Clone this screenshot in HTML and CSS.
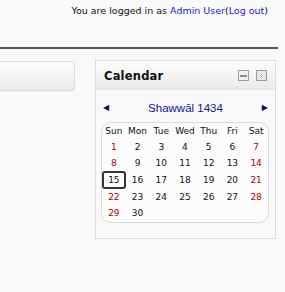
FILE: index.html
```html
<!DOCTYPE html>
<html lang="en">
<head>
  <meta charset="UTF-8">
  <meta name="viewport" content="width=device-width, initial-scale=1.0">
  <title>Calendar</title>
  <link rel="stylesheet" href="styles.css">
</head>
<body>
  <div class="page">
    <header class="topbar">
      <div class="login">You are logged in as <a href="#">Admin User</a>(<a href="#">Log out</a>)</div>
    </header>

    <div class="main">
      <div class="region-main">
        <div class="mainbox"></div>
      </div>

      <aside class="region-side">
        <div class="block">
          <div class="block-header">
            <h2>Calendar</h2>
            <div class="block-controls">
              <svg width="11" height="11" viewBox="0 0 11 11">
                <rect x="0.5" y="0.5" width="10" height="10" fill="#f2f2f2" stroke="#9c9c9c"/>
                <rect x="2" y="5" width="7" height="2" fill="#8a8a8a"/>
              </svg>
              <svg width="11" height="11" viewBox="0 0 11 11">
                <rect x="0.5" y="0.5" width="10" height="10" fill="#e4e4e4" stroke="#9c9c9c"/>
                <path d="M7 3 L4.5 5.5 L7 8" fill="none" stroke="#fff" stroke-width="2"/>
                <path d="M6.5 3.5 L4.5 5.5 L6.5 7.5" fill="none" stroke="#8a8a8a" stroke-width="1"/>
              </svg>
            </div>
          </div>

          <div class="block-content">
            <div class="cal-nav">
              <a href="#" class="arrow">&#9664;</a>
              <a href="#" class="month">Shawwāl 1434</a>
              <a href="#" class="arrow">&#9654;</a>
            </div>

            <table class="cal">
              <tr>
                <th>Sun</th><th>Mon</th><th>Tue</th><th>Wed</th><th>Thu</th><th>Fri</th><th>Sat</th>
              </tr>
              <tr>
                <td class="weekend">1</td><td>2</td><td>3</td><td>4</td><td>5</td><td>6</td><td class="weekend">7</td>
              </tr>
              <tr>
                <td class="weekend">8</td><td>9</td><td>10</td><td>11</td><td>12</td><td>13</td><td class="weekend">14</td>
              </tr>
              <tr>
                <td class="today">15</td><td>16</td><td>17</td><td>18</td><td>19</td><td>20</td><td class="weekend">21</td>
              </tr>
              <tr>
                <td class="weekend">22</td><td>23</td><td>24</td><td>25</td><td>26</td><td>27</td><td class="weekend">28</td>
              </tr>
              <tr>
                <td class="weekend">29</td><td>30</td><td></td><td></td><td></td><td></td><td></td>
              </tr>
            </table>
          </div>
        </div>
      </aside>
    </div>
  </div>
</body>
</html>
```

FILE: styles.css
```css
body {
  margin: 0;
  background: #f9f9f9;
  font-family: 'DejaVu Sans', Verdana, sans-serif;
  color: #111;
  overflow: hidden;
}
a {
  color: #2222cc;
  text-decoration: none;
}
.page {
  margin-right: 7px;
}
.topbar {
  box-sizing: border-box;
  height: 49px;
  border-bottom: 2px solid #555;
}
.login {
  text-align: right;
  font-size: 9.5px;
  line-height: 12px;
  padding: 5px 10px 0 0;
}
.main {
  display: grid;
  grid-template-columns: 1fr 181px;
  gap: 20px;
  padding: 11px 2px 0 0;
}
.mainbox {
  margin: 1px 0 0 -6px;
  height: 28px;
  border: 1px solid #dcdcdc;
  border-radius: 3px;
  background: linear-gradient(to bottom, #fbfbfb, #ececec);
}
.block {
  border: 1px solid #dcdcdc;
  background: #f9f9f9;
}
.block-header {
  height: 29px;
  display: flex;
  align-items: center;
  justify-content: space-between;
  padding: 0 8px;
  background: linear-gradient(to bottom, #fdfdfd, #e9e9e9);
}
.block-header h2 {
  margin: 0;
  font-size: 11.5px;
  line-height: 14px;
  font-weight: bold;
  color: #111;
  letter-spacing: 0.2px;
}
.block-controls {
  display: flex;
  gap: 7px;
}
.block-controls svg {
  display: block;
}
.block-content {
  padding: 10px 6px 15px 5px;
}
.cal-nav {
  display: flex;
  justify-content: space-between;
  align-items: center;
  height: 16px;
  padding: 0 1px 0 2px;
  margin-bottom: 6px;
}
.cal-nav .arrow {
  color: #0a0a80;
  font-size: 8px;
  line-height: 16px;
}
.cal-nav .month {
  color: #141490;
  font-family: 'Liberation Sans', Arial, sans-serif;
  font-size: 11.5px;
  line-height: 16px;
}
.cal {
  width: 100%;
  table-layout: fixed;
  border-collapse: separate;
  border-spacing: 0;
  border: 1px solid #dadada;
  border-radius: 10px;
  background: #fcfcfc;
  font-size: 9px;
  padding-bottom: 1px;
}
.cal th {
  font-weight: normal;
  height: 16px;
  padding: 0;
  line-height: 16px;
  color: #111;
}
.cal td {
  text-align: center;
  height: 16px;
  padding: 0;
  line-height: 16px;
  color: #111;
}
.cal td.weekend {
  color: #aa0000;
}
.cal td.today {
  border: 2px solid #333;
  border-radius: 3px;
  line-height: 14px;
  height: 14px;
}
```
